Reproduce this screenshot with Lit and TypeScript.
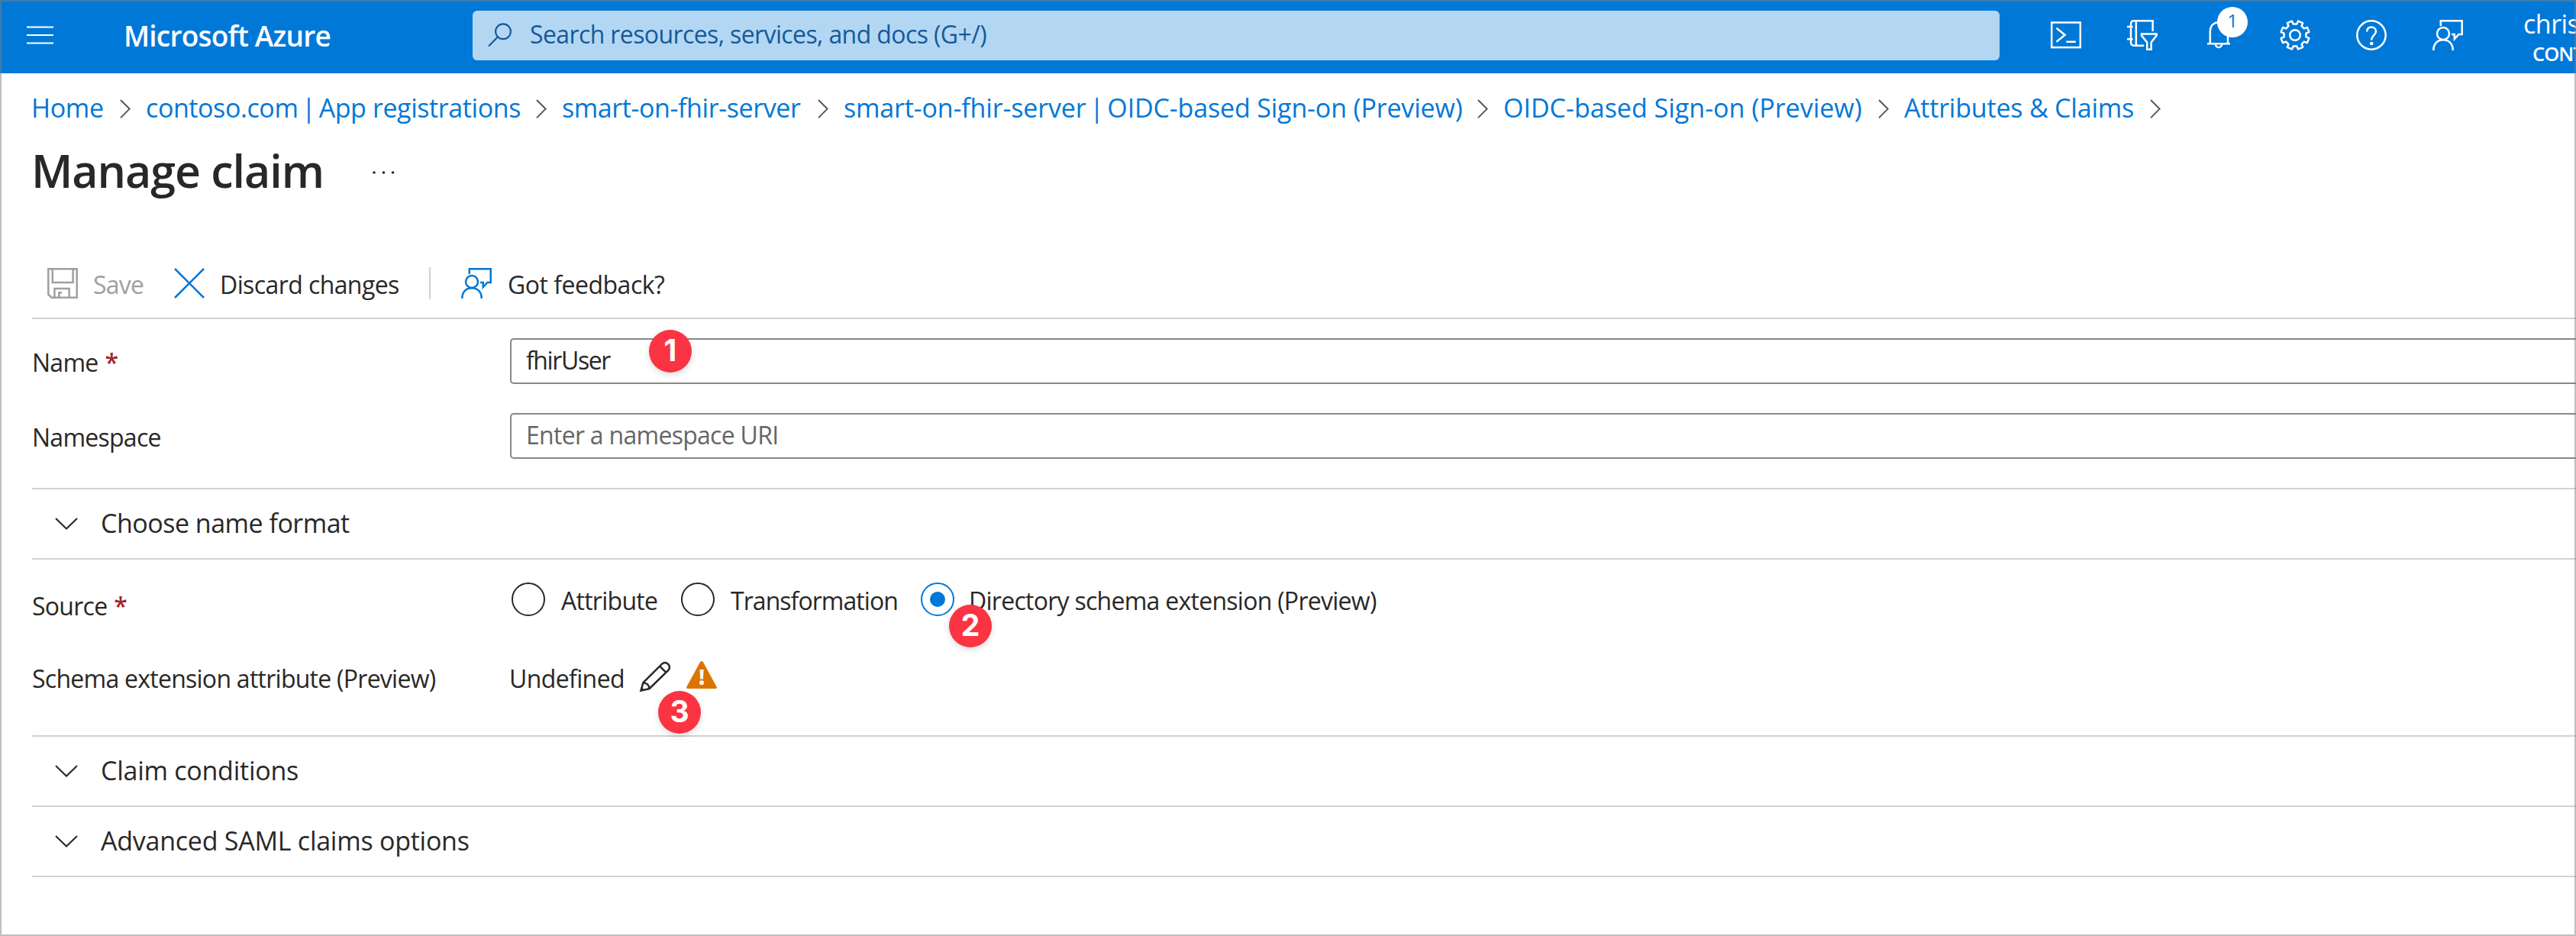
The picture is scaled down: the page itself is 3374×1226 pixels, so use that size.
import { LitElement, html, css, svg } from 'lit';
import { customElement, property } from 'lit/decorators.js';

/** Outline of a cog with the given number of teeth, centred in a 40 x 40 box. */
function cogPath(teeth: number): string {
  const pitch = (Math.PI * 2) / teeth;
  const pts: string[] = [];
  for (let i = 0; i < teeth; i++) {
    const mid = pitch * (i + 0.5);
    const corners: [number, number][] = [
      [-0.3, 14.6],
      [-0.22, 18.9],
      [0.22, 18.9],
      [0.3, 14.6],
    ];
    for (const [f, r] of corners) {
      const a = mid + f * pitch;
      pts.push(`${(20 + r * Math.cos(a)).toFixed(2)} ${(20 + r * Math.sin(a)).toFixed(2)}`);
    }
  }
  return `M${pts.join('L')}Z`;
}

const icons: Record<string, unknown> = {
  shell: svg`<rect x="1.2" y="3.5" width="37.6" height="32.6"/><path d="M7.5 10.8L18.6 19.8L7.5 28.8M20.3 28.8H32.8"/>`,
  directory: svg`<path d="M33.6 15V1.3H8.5a3.5 3.5 0 0 0-3.5 3.5V30a3.7 3.7 0 0 0 3.7 3.7H22.2M11.8 1.3V33.7M0 9H7.6M0 25.3H7.6"/><path d="M19 18.4H38.6V20.6L31.6 29.4V38.8H26.2V29.4L19 20.6Z"/>`,
  bell: svg`<path d="M5 31.3H35M8.8 31.3V15C8.8 7.5 13.5 3.2 20.4 3.2S32 7.5 32 15V31.3M15.8 31.5a4.2 4.6 0 0 0 8.4 0"/>`,
  gear: svg`<path d="${cogPath(8)}" stroke-linejoin="round"/><circle cx="20" cy="20" r="6.8"/>`,
  help: svg`<circle cx="20" cy="20" r="18.7"/><path d="M14.2 15.6C14.2 11.6 16.6 9.6 20 9.6S26 11.8 26 15C26 19.8 20.2 20.3 20.2 26.6"/><circle class="solid" cx="20.2" cy="31" r="2.3"/>`,
  feedback: svg`<path d="M10.8 8V1.3H38.7V19H34.4L28.8 25V19H25"/><circle cx="14" cy="18" r="8"/><path d="M1.3 40C1.3 31.5 6.5 26.2 14 26.2S26.8 31.5 26.8 40"/>`,
  save: svg`<path d="M1.3 1.3H38.7V38.7H5.6L1.3 34.6ZM6.8 1.3V19H33.6V1.3M9.4 38.7V27H28.6V38.7M15.4 38.7V32.2H19"/>`,
  discard: svg`<path d="M1 1L39 39M39 1L1 39"/>`,
  pencil: svg`<path d="M1.5 38.6L4.4 28.2L29.6 3.2a5.9 5.9 0 0 1 8.2 8.2L12.6 36Z M26.2 6.6L34.4 14.8M4.4 28.2C8.8 28.2 12.4 31.6 12.6 36"/><path class="solid" d="M1.5 38.6L2.8 34.4L5.7 37.2Z"/>`,
  warning: svg`<path class="solid" d="M18 1.2Q20 -1 22 1.2L39.6 33.4Q40.6 36 38 36H2Q-.6 36 .4 33.4Z"/><path class="mark" d="M17.5 11H22.6L21.9 23.4H18.2Z"/><circle class="mark" cx="20" cy="28.2" r="2.9"/>`,
  search: svg`<circle cx="20" cy="11.2" r="9.9"/><path d="M13.1 18.3L1 30.5"/>`,
  down: svg`<path d="M1 1L15 14.6L29 1"/>`,
  right: svg`<path d="M1 1L12.6 12.6L1 24.4"/>`,
  menu: svg`<path d="M0 1.5H35M0 12H35M0 22.5H35"/>`,
  more: svg`<circle class="solid" cx="2" cy="2" r="1.8"/><circle class="solid" cx="14.5" cy="2" r="1.8"/><circle class="solid" cx="26.5" cy="2" r="1.8"/>`,
};

const boxes: Record<string, [number, number]> = {
  search: [31, 32],
  down: [30, 16],
  right: [14, 26],
  menu: [35, 24],
  more: [29, 4],
  warning: [40, 36],
};

@customElement('az-icon')
export class AzIcon extends LitElement {
  static styles = css`
    :host { display: block; flex: none; }
    svg {
      display: block; overflow: visible; fill: none;
      stroke: currentColor; stroke-width: var(--icon-stroke, 2.5);
    }
    .solid { fill: currentColor; stroke: none; }
    .mark { fill: #fff; stroke: none; }
  `;
  @property() name = '';
  render() {
    const [w, h] = boxes[this.name] ?? [40, 40];
    return html`<svg width=${w} height=${h} viewBox="0 0 ${w} ${h}">${icons[this.name]}</svg>`;
  }
}

const crumbs: string[][] = [
  ['Home'],
  ['contoso.com', 'App registrations'],
  ['smart-on-fhir-server'],
  ['smart-on-fhir-server', 'OIDC-based Sign-on (Preview)'],
  ['OIDC-based Sign-on (Preview)'],
  ['Attributes & Claims'],
];

@customElement('app-root')
export class AppRoot extends LitElement {
  static styles = css`
    * { box-sizing: border-box; }
    :host {
      display: block; position: relative; width: 3374px; height: 1226px;
      overflow: hidden; background: #fff; color: #292827;
      font-family: 'Open Sans', 'Noto Sans', sans-serif;
      font-size: 32px; line-height: 40px; white-space: nowrap;
    }
    .frame {
      position: absolute; inset: 0; border: 2px solid rgba(128, 128, 128, 0.5);
      pointer-events: none;
    }

    .top {
      display: flex; align-items: flex-start; height: 96px; padding: 14px 0 0 35px;
      background: #0078d7; color: #fff;
    }
    .menu { padding-top: 20px; --icon-stroke: 2.2; }
    .brand {
      flex: none; width: 549px; padding-left: 92px; font-size: 37px; font-weight: 600;
      line-height: 65px; letter-spacing: -0.77px;
    }
    .search {
      display: flex; flex: none; width: 2000px; height: 65px; padding-left: 20px;
      border-radius: 6px; background: #b3d7f3; color: #155a9a;
      font-size: 32px; line-height: 61px; letter-spacing: -0.61px;
    }
    .search az-icon { margin: 16px 24px 0 0; --icon-stroke: 2.2; }
    .tools { display: flex; flex: none; gap: 60px; margin: 12px 0 0 67px; }
    .bell { position: relative; }
    .count {
      position: absolute; left: 18px; top: -17px; width: 40px; height: 40px;
      border-radius: 50%; background: #fff; color: #0078d7; text-align: center;
      font-size: 24px; line-height: 36px;
    }
    .account { flex: none; margin: -3px 0 0 79px; }
    .user { font-size: 34px; line-height: 40px; letter-spacing: -0.5px; }
    .tenant {
      padding: 4px 0 0 12px; font-size: 25.5px; font-weight: 600; line-height: 30px;
      letter-spacing: -1px;
    }

    .crumbs {
      display: grid; grid-template-columns: 150px 545px 369px 864px 525px 356px;
      height: 90px; padding-left: 41px; align-items: center; font-size: 34px;
    }
    .crumb { display: flex; justify-content: space-between; padding-right: 20px; align-items: center; }
    .crumb az-icon { color: #5a5856; margin-top: 3px; --icon-stroke: 2; }
    .link { color: #0078d7; letter-spacing: -0.33px; }
    .crumb:nth-child(2) .link { letter-spacing: -0.41px; }
    .crumb:nth-child(3) .link { letter-spacing: -0.41px; }
    .crumb:nth-child(4) .link { letter-spacing: -0.16px; }
    .crumb:nth-child(5) .link { letter-spacing: 0; }
    .crumb:nth-child(6) .link { letter-spacing: -0.2px; }
    .pipe { margin: 0 -4px; }

    .heading { display: flex; align-items: center; height: 74px; padding-left: 41px; }
    .title {
      margin: 0; width: 447px; font-size: 59px; font-weight: 600; line-height: 74px;
      letter-spacing: -1px;
    }
    .heading az-icon { margin-top: 6px; }

    .page { padding-left: 42px; }
    .toolbar {
      display: flex; align-items: center; height: 92px; margin-top: 66px;
      padding-left: 20px; border-bottom: 2px solid #d2d2d2; line-height: 43px;
    }
    .disabled { color: #a19f9d; }
    .blue { color: #0078d7; }
    .save { display: flex; width: 166px; align-items: center; }
    .save-text { margin: 2px 0 0 20px; letter-spacing: -0.77px; }
    .discard { display: flex; width: 334px; align-items: center; }
    .discard-text { margin: 2px 0 0 20px; letter-spacing: -0.59px; }
    .separator { width: 2px; height: 42px; background: #d0d0d0; }
    .feedback { display: flex; align-items: center; padding-left: 40px; }
    .feedback-text { margin: 2px 0 0 21px; letter-spacing: -0.5px; }

    .row { display: grid; grid-template-columns: 626px 1fr; align-items: center; }
    .label { letter-spacing: -0.74px; padding-top: 3px; }
    .required { color: #a4262c; padding-left: 9px; font-weight: 600; }
    .name { margin-top: 25px; }
    .namespace { margin-top: 38px; }
    .input {
      height: 60px; padding-left: 19px; border: 2px solid #8a8886; border-right: 0;
      border-radius: 5px 0 0 5px; line-height: 54px; letter-spacing: -1.4px;
    }
    .placeholder { color: #666; letter-spacing: -0.72px; }

    .section {
      display: flex; align-items: center; height: 92px; padding-left: 30px;
      border-top: 2px solid #d2d2d2; font-size: 34px; letter-spacing: -0.25px;
    }
    .section az-icon { margin-right: 30px; --icon-stroke: 2.1; }
    .section span { margin-top: -2px; }
    .first { height: 94px; margin-top: 38px; border-bottom: 2px solid #d2d2d2; letter-spacing: -0.5px; }
    .conditions { margin-top: 57px; }
    .last { height: 94px; border-bottom: 2px solid #d2d2d2; }

    .source { margin-top: 30px; height: 44px; align-items: start; }
    .source .label { padding-top: 11px; }
    .options { display: grid; grid-template-columns: 222px 314px auto; padding-left: 2px; height: 44px; }
    .option { display: flex; gap: 21px; letter-spacing: -0.73px; line-height: 47px; }
    .option:nth-child(2) { letter-spacing: -0.95px; }
    .option:nth-child(3) { gap: 19px; }
    .radio {
      display: grid; place-items: center; width: 44px; height: 44px; flex: none;
      border: 2px solid #292827; border-radius: 50%;
    }
    .selected { border-color: #0078d7; }
    .selected::after { content: ''; width: 20px; height: 20px; border-radius: 50%; background: #0078d7; }

    .schema { margin-top: 59px; height: 40px; align-items: start; }
    .value { display: flex; height: 40px; letter-spacing: -0.62px; }
    .value span { width: 171px; margin-left: -1px; line-height: 45px; }
    .warning { margin-left: 21px; color: #db7500; }

    .step {
      position: absolute; width: 56px; height: 56px; border-radius: 50%;
      background: #fa3442; color: #fff; text-align: center;
      font-family: Inter, 'Liberation Sans', sans-serif; font-size: 39px; font-weight: 700;
      line-height: 54px; box-shadow: 0 3px 8px rgba(0, 0, 0, 0.14);
    }
    .one { left: 850px; top: 432px; }
    .two { left: 1243px; top: 792px; }
    .three { left: 862px; top: 905px; }
  `;

  render() {
    return html`
      <header class="top">
        <az-icon class="menu" name="menu"></az-icon>
        <div class="brand">Microsoft Azure</div>
        <div class="search">
          <az-icon name="search"></az-icon>
          <span>Search resources, services, and docs (G+/)</span>
        </div>
        <div class="tools">
          <az-icon name="shell"></az-icon>
          <az-icon name="directory"></az-icon>
          <div class="bell"><az-icon name="bell"></az-icon><span class="count">1</span></div>
          <az-icon name="gear"></az-icon>
          <az-icon name="help"></az-icon>
          <az-icon name="feedback"></az-icon>
        </div>
        <div class="account">
          <div class="user">chris</div>
          <div class="tenant">CONT</div>
        </div>
      </header>

      <nav class="crumbs">
        ${crumbs.map(
          ([head, tail]) => html`<div class="crumb">
            <a class="link">${head}${tail ? html` <span class="pipe">|</span> ${tail}` : ''}</a>
            <az-icon name="right"></az-icon>
          </div>`
        )}
      </nav>
      <div class="heading">
        <h1 class="title">Manage claim</h1>
        <az-icon name="more"></az-icon>
      </div>

      <main class="page">
        <div class="toolbar">
          <div class="save disabled"><az-icon name="save"></az-icon><span class="save-text">Save</span></div>
          <div class="discard"><az-icon class="blue" name="discard"></az-icon><span class="discard-text">Discard changes</span></div>
          <span class="separator"></span>
          <div class="feedback"><az-icon class="blue" name="feedback"></az-icon><span class="feedback-text">Got feedback?</span></div>
        </div>

        <div class="row name">
          <div class="label">Name<span class="required">*</span></div>
          <div class="input">fhirUser</div>
        </div>
        <div class="row namespace">
          <div class="label">Namespace</div>
          <div class="input placeholder">Enter a namespace URI</div>
        </div>

        <div class="section first"><az-icon name="down"></az-icon><span>Choose name format</span></div>

        <div class="row source">
          <div class="label">Source<span class="required">*</span></div>
          <div class="options">
            <div class="option"><i class="radio"></i>Attribute</div>
            <div class="option"><i class="radio"></i>Transformation</div>
            <div class="option"><i class="radio selected"></i>Directory schema extension (Preview)</div>
          </div>
        </div>
        <div class="row schema">
          <div class="label">Schema extension attribute (Preview)</div>
          <div class="value">
            <span>Undefined</span>
            <az-icon name="pencil"></az-icon>
            <az-icon class="warning" name="warning"></az-icon>
          </div>
        </div>

        <div class="section conditions"><az-icon name="down"></az-icon><span>Claim conditions</span></div>
        <div class="section last"><az-icon name="down"></az-icon><span>Advanced SAML claims options</span></div>
      </main>

      <div class="step one">1</div>
      <div class="step two">2</div>
      <div class="step three">3</div>
      <div class="frame"></div>
    `;
  }
}
